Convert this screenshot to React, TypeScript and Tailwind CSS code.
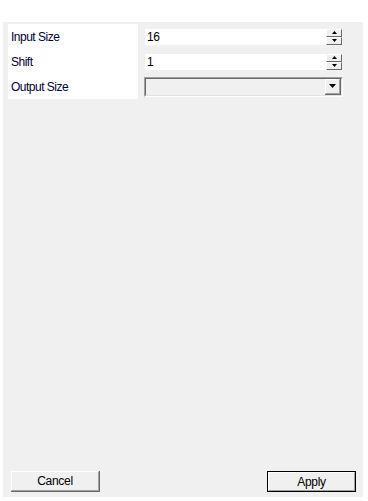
import React from "react";

const font = { fontFamily: '"Liberation Sans", Tahoma, Arial, sans-serif' };

function SpinArrow({ up }: { up?: boolean }) {
  return (
    <svg width="5" height="3" viewBox="0 0 5 3" className="block">
      {up ? <path d="M2.5 0 L5 3 L0 3 Z" fill="#000" /> : <path d="M0 0 L5 0 L2.5 3 Z" fill="#000" />}
    </svg>
  );
}

function RaisedBox({ className, children }: { className: string; children?: React.ReactNode }) {
  return (
    <div className={`flex items-center justify-center border border-t-white border-l-white border-r-[#696969] border-b-[#696969] bg-[#f0f0f0] ${className}`}>
      {children}
    </div>
  );
}

function Spinner({ value }: { value: string }) {
  return (
    <div className="flex h-[16px] w-[197px] ml-[1px]">
      <div className="flex w-[181px] items-center bg-white pl-[2px] text-[12px] tracking-[-0.3px] text-black">
        {value}
      </div>
      <div className="flex w-[16px] flex-col">
        <RaisedBox className="h-[8px] w-[16px]">
          <SpinArrow up />
        </RaisedBox>
        <RaisedBox className="h-[8px] w-[16px]">
          <SpinArrow />
        </RaisedBox>
      </div>
    </div>
  );
}

function Select() {
  return (
    <div className="h-[20px] w-[199px] border border-t-[#a0a0a0] border-l-[#a0a0a0] border-r-white border-b-white">
      <div className="flex h-full w-full justify-end border border-t-[#696969] border-l-[#696969] border-r-[#e3e3e3] border-b-[#e3e3e3] bg-[#f0f0f0]">
        <div className="h-full w-[16px] border-r border-b border-r-[#696969] border-b-[#696969]">
          <div className="flex h-full w-full items-center justify-center border border-t-white border-l-white border-r-[#a0a0a0] border-b-[#a0a0a0] bg-[#f0f0f0]">
            <svg width="7" height="4" viewBox="0 0 7 4" className="block">
              <path d="M0 0 L7 0 L3.5 4 Z" fill="#000" />
            </svg>
          </div>
        </div>
      </div>
    </div>
  );
}

function Button({ label, isDefault }: { label: string; isDefault?: boolean }) {
  return (
    <div
      className={`h-[21px] w-[89px] ${
        isDefault ? "border border-black" : "border-r border-b border-r-[#696969] border-b-[#696969]"
      }`}
    >
      <div className="flex h-full w-full items-center justify-center border border-t-white border-l-white border-r-[#a0a0a0] border-b-[#a0a0a0] bg-[#f0f0f0] text-[12px] tracking-[-0.3px] text-black">
        {label}
      </div>
    </div>
  );
}

export default function App() {
  const labels = ["Input Size", "Shift", "Output Size"];
  return (
    <div className="h-[501px] w-[368px] bg-white pt-[22px] pl-[3px]" style={font}>
      <div className="flex h-[475px] w-[360px] flex-col bg-[#f0f0f0]">
        <div className="flex pt-[2px] pl-[5px]">
          <div className="flex w-[130px] flex-col bg-white">
            {labels.map((l) => (
              <div key={l} className="flex h-[25px] items-center pl-[3px] text-[12px] tracking-[-0.5px] text-[#000033]">
                {l}
              </div>
            ))}
          </div>
          <div className="ml-[6px] flex flex-col">
            <div className="flex h-[25px] items-center">
              <Spinner value="16" />
            </div>
            <div className="flex h-[25px] items-center">
              <Spinner value="1" />
            </div>
            <div className="flex h-[25px] items-center">
              <Select />
            </div>
          </div>
        </div>
        <div className="flex-1" />
        <div className="flex justify-between pb-[5px] pl-[8px] pr-[7px]">
          <Button label="Cancel" />
          <Button label="Apply" isDefault />
        </div>
      </div>
    </div>
  );
}
